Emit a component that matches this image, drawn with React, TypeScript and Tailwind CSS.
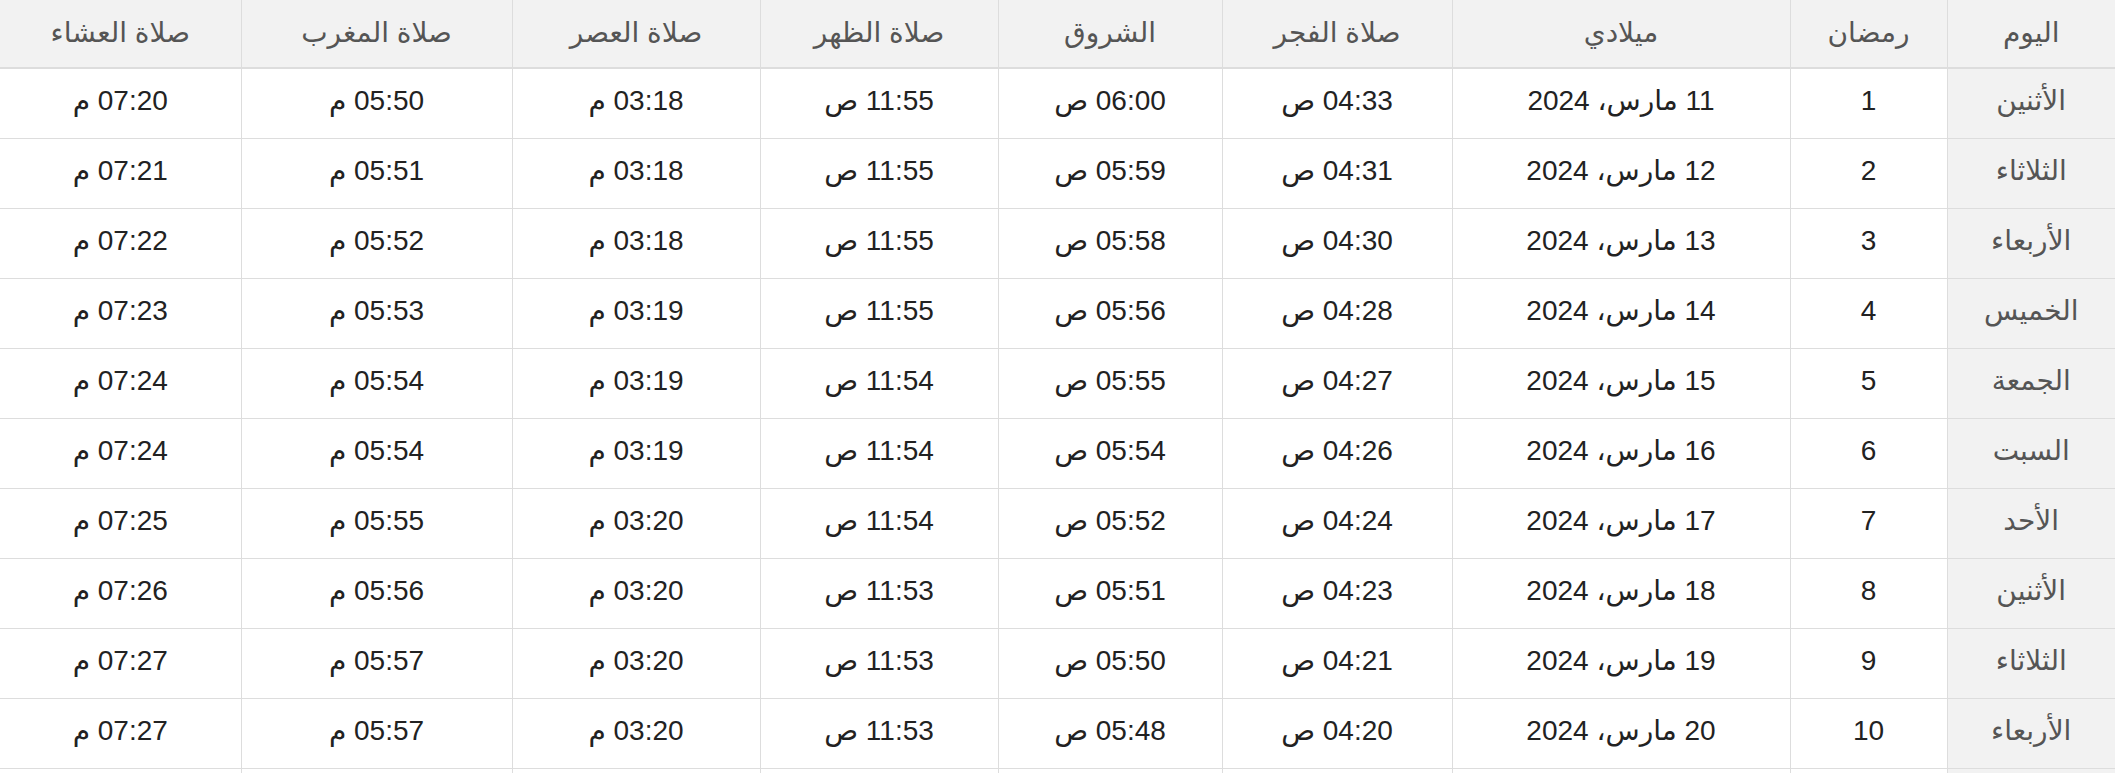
const rows: string[][] = [
  ["الأثنين", "1", "11 مارس، 2024", "04:33 ص", "06:00 ص", "11:55 ص", "03:18 م", "05:50 م", "07:20 م"],
  ["الثلاثاء", "2", "12 مارس، 2024", "04:31 ص", "05:59 ص", "11:55 ص", "03:18 م", "05:51 م", "07:21 م"],
  ["الأربعاء", "3", "13 مارس، 2024", "04:30 ص", "05:58 ص", "11:55 ص", "03:18 م", "05:52 م", "07:22 م"],
  ["الخميس", "4", "14 مارس، 2024", "04:28 ص", "05:56 ص", "11:55 ص", "03:19 م", "05:53 م", "07:23 م"],
  ["الجمعة", "5", "15 مارس، 2024", "04:27 ص", "05:55 ص", "11:54 ص", "03:19 م", "05:54 م", "07:24 م"],
  ["السبت", "6", "16 مارس، 2024", "04:26 ص", "05:54 ص", "11:54 ص", "03:19 م", "05:54 م", "07:24 م"],
  ["الأحد", "7", "17 مارس، 2024", "04:24 ص", "05:52 ص", "11:54 ص", "03:20 م", "05:55 م", "07:25 م"],
  ["الأثنين", "8", "18 مارس، 2024", "04:23 ص", "05:51 ص", "11:53 ص", "03:20 م", "05:56 م", "07:26 م"],
  ["الثلاثاء", "9", "19 مارس، 2024", "04:21 ص", "05:50 ص", "11:53 ص", "03:20 م", "05:57 م", "07:27 م"],
  ["الأربعاء", "10", "20 مارس، 2024", "04:20 ص", "05:48 ص", "11:53 ص", "03:20 م", "05:57 م", "07:27 م"],
];

const headers = [
  "اليوم",
  "رمضان",
  "ميلادي",
  "صلاة الفجر",
  "الشروق",
  "صلاة الظهر",
  "صلاة العصر",
  "صلاة المغرب",
  "صلاة العشاء",
];

// column widths, right to left
const widths = [168, 157, 338, 230, 224, 238, 248, 271, 241];

export default function App() {
  return (
    <div
      dir="rtl"
      className="w-[2115px] h-[773px] overflow-hidden bg-white"
      style={{ fontFamily: '"Liberation Sans", "DejaVu Sans", sans-serif' }}
    >
      <table className="w-full table-fixed border-collapse text-[28px] leading-none">
        <colgroup>
          {widths.map((w, i) => (
            <col key={i} style={{ width: w }} />
          ))}
        </colgroup>
        <thead>
          <tr className="h-[68px] border-b-2 border-[#dddddd] bg-[#f2f2f2]">
            {headers.map((h) => (
              <th
                key={h}
                className="border-l border-[#dddddd] last:border-l-0 text-center align-middle font-normal text-[#555555] pb-[2px]"
              >
                {h}
              </th>
            ))}
          </tr>
        </thead>
        <tbody>
          {rows.map((r, ri) => (
            <tr key={ri} className="h-[70px] border-b border-[#dddddd]">
              {r.map((c, ci) =>
                ci === 0 ? (
                  <th
                    key={ci}
                    className="border-l border-[#dddddd] bg-[#f2f2f2] text-center align-middle font-normal text-[#555555] pb-[4px]"
                  >
                    {c}
                  </th>
                ) : (
                  <td
                    key={ci}
                    className="border-l border-[#dddddd] last:border-l-0 text-center align-middle text-[#222222] pb-[4px]"
                  >
                    {c}
                  </td>
                )
              )}
            </tr>
          ))}
          {/* next row, only its top edge is in view */}
          <tr className="h-[70px]">
            {widths.map((_, ci) =>
              ci === 0 ? (
                <th key={ci} className="border-l border-[#dddddd] bg-[#f2f2f2]" />
              ) : (
                <td key={ci} className="border-l border-[#dddddd] last:border-l-0" />
              )
            )}
          </tr>
        </tbody>
      </table>
    </div>
  );
}
